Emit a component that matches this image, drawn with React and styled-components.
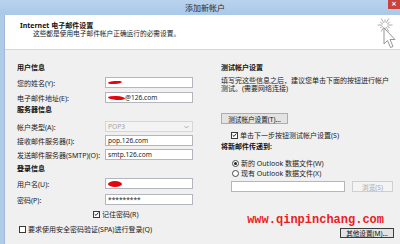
import React from "react";
import styled, { createGlobalStyle } from "styled-components";

const GlobalStyle = createGlobalStyle`
  *, *::before, *::after { box-sizing: border-box; }
  html, body { margin: 0; padding: 0; }
  body {
    background: #f0f0f0;
    font-family: "Noto Sans", "Noto Sans CJK SC", sans-serif;
    font-size: 7px;
    color: #1b1b1b;
  }
  #root { width: 400px; height: 244px; }
`;

const Window = styled.div`
  width: 400px;
  height: 244px;
  overflow: hidden;
  display: flex;
  flex-direction: column;
  background: #f0f0f0;
`;

const TitleBar = styled.div`
  height: 15px;
  flex: none;
  display: grid;
  grid-template-columns: 1fr auto 1fr;
  padding-left: 10px;
  background: linear-gradient(#b9d3ee, #aac8e8);
`;

const Title = styled.div`
  grid-column: 2;
  align-self: center;
  font-family: "Noto Sans CJK SC", sans-serif;
  font-size: 8px;
  line-height: 15px;
  color: #2a2a2a;
`;

const CloseButton = styled.div`
  grid-column: 3;
  justify-self: end;
  align-self: start;
  width: 12px;
  height: 9px;
  background: #c9433b;
  color: #fff;
  font-family: "DejaVu Sans", sans-serif;
  font-size: 7px;
  font-weight: bold;
  line-height: 9px;
  text-align: center;
`;

const Frame = styled.div`
  flex: 1;
  display: flex;
  min-height: 0;
`;

const Edge = styled.div`
  width: 5px;
  flex: none;
  background: #aecbea;
  border-right: 1px solid #9fb9d8;
`;

const Content = styled.div`
  flex: 1;
  display: flex;
  flex-direction: column;
  min-width: 0;
`;

const Header = styled.div`
  height: 35px;
  flex: none;
  display: flex;
  justify-content: space-between;
  background: #fff;
  border-bottom: 1px solid #d7d7d7;
`;

const HeaderText = styled.div`
  padding: 7px 0 0 15px;
  line-height: 8px;
`;

const HeaderTitle = styled.div`
  font-weight: bold;
  color: #111;
`;

const HeaderSub = styled.div`
  padding-left: 13px;
  font-size: 6.7px;
  color: #222;
`;

const CursorArt = styled.svg`
  flex: none;
  margin: 1px 2px 0 0;
`;

const Body = styled.div`
  flex: 1;
  display: grid;
  grid-template-columns: 176px 173px;
  column-gap: 28px;
  align-content: start;
  padding: 12px 0 0 12px;
`;

const Column = styled.div`
  display: flex;
  flex-direction: column;
`;

const Heading = styled.div`
  height: 12px;
  line-height: 12px;
  font-weight: bold;
  color: #111;
  margin-top: ${(p) => p.$mt || 0}px;
`;

const FieldRow = styled.div`
  display: flex;
  align-items: center;
  height: 11px;
  margin-top: ${(p) => p.$mt || 0}px;
`;

const Label = styled.div`
  width: 88px;
  flex: none;
  white-space: nowrap;
`;

const TextBox = styled.div`
  flex: 1;
  height: 100%;
  display: flex;
  align-items: center;
  padding-left: 2px;
  background: #fff;
  border: 1px solid #b4b6bd;
  font-size: 6.6px;
  white-space: nowrap;
  overflow: hidden;
  color: #222;
`;

const SelectBox = styled(TextBox)`
  justify-content: space-between;
  padding-right: 3px;
  background: #f3f3f3;
  border-color: #d6d6d6;
  color: #a4a4a4;
`;

const Scribble = styled.span`
  display: inline-block;
  width: ${(p) => p.$w}px;
  height: ${(p) => p.$h}px;
  background: #e4060f;
  border-radius: 50%;
  flex: none;
  transform: rotate(${(p) => p.$r || 0}deg);
`;

const CheckRow = styled.label`
  display: flex;
  align-items: center;
  gap: 2px;
  height: 10px;
  margin-top: ${(p) => p.$mt || 0}px;
  padding-left: ${(p) => p.$indent || 0}px;
  white-space: nowrap;
`;

const CheckBox = styled.span`
  width: 7px;
  height: 7px;
  flex: none;
  display: flex;
  align-items: center;
  justify-content: center;
  background: #fff;
  border: 1px solid #3a3a3a;
`;

const Radio = styled.span`
  width: 7px;
  height: 7px;
  flex: none;
  display: flex;
  align-items: center;
  justify-content: center;
  border-radius: 50%;
  background: #fff;
  border: 1px solid #4a4a4a;
  &::after {
    content: "";
    width: 3px;
    height: 3px;
    border-radius: 50%;
    background: ${(p) => (p.$on ? "#222" : "transparent")};
  }
`;

const Paragraph = styled.div`
  margin-top: ${(p) => p.$mt || 0}px;
  line-height: 8px;
  white-space: nowrap;
`;

const Button = styled.div`
  width: ${(p) => p.$w}px;
  height: ${(p) => p.$h || 11}px;
  flex: none;
  display: flex;
  align-items: center;
  justify-content: center;
  margin-top: ${(p) => p.$mt || 0}px;
  align-self: ${(p) => (p.$end ? "flex-end" : "flex-start")};
  background: ${(p) => (p.$disabled ? "#f4f4f4" : "#e3e3e3")};
  border: 1px solid ${(p) => (p.$disabled ? "#cfcfcf" : p.$default ? "#3c3c3c" : "#adadad")};
  color: ${(p) => (p.$disabled ? "#a8a8a8" : "#111")};
  font-size: 6.6px;
  white-space: nowrap;
`;

const BrowseRow = styled.div`
  display: flex;
  gap: 7px;
  height: 11px;
  margin-top: ${(p) => p.$mt || 0}px;
  padding-left: 10px;
`;

const PathBox = styled.div`
  width: 114px;
  height: 100%;
  background: #fff;
  border: 1px solid #b4b6bd;
`;

const Watermark = styled.div`
  margin-top: ${(p) => p.$mt || 0}px;
  align-self: flex-end;
  margin-right: 10px;
  height: 12px;
  line-height: 12px;
  font-family: "Liberation Mono", monospace;
  font-size: 12px;
  font-weight: bold;
  color: #ec1c24;
`;

function Check() {
  return (
    <svg width="6" height="6" viewBox="0 0 6 6">
      <path d="M0.8 3.1 L2.4 4.7 L5.3 1.2" fill="none" stroke="#111" strokeWidth="1.1" />
    </svg>
  );
}

function Cursor() {
  const rays = [];
  for (let i = 0; i < 12; i++) {
    const a = (i * Math.PI) / 6;
    const r1 = 2.5;
    const r2 = i % 2 ? 5.5 : 7.5;
    rays.push(
      <line
        key={i}
        x1={9 + r1 * Math.cos(a)}
        y1={9 + r1 * Math.sin(a)}
        x2={9 + r2 * Math.cos(a)}
        y2={9 + r2 * Math.sin(a)}
        stroke="#9a9a9a"
        strokeWidth="0.8"
      />
    );
  }
  return (
    <CursorArt width="22" height="34" viewBox="0 0 22 34">
      {rays}
      <path
        d="M8 12 L8 28 L11.5 24.5 L14.5 31.5 L17 30.5 L14 23.5 L19 23.5 Z"
        fill="#fff"
        stroke="#8a8a8a"
        strokeWidth="0.9"
        strokeLinejoin="round"
      />
    </CursorArt>
  );
}

export default function App() {
  return (
    <>
      <GlobalStyle />
      <Window>
        <TitleBar>
          <Title>添加新帐户</Title>
          <CloseButton>×</CloseButton>
        </TitleBar>
        <Frame>
          <Edge />
          <Content>
            <Header>
              <HeaderText>
                <HeaderTitle>Internet 电子邮件设置</HeaderTitle>
                <HeaderSub>这些都是使用电子邮件帐户正确运行的必需设置。</HeaderSub>
              </HeaderText>
              <Cursor />
            </Header>
            <Body>
              <Column>
                <Heading>用户信息</Heading>
                <FieldRow $mt={3}>
                  <Label>您的姓名(Y):</Label>
                  <TextBox>
                    <Scribble $w={14} $h={3} $r={-4} />
                  </TextBox>
                </FieldRow>
                <FieldRow $mt={4}>
                  <Label>电子邮件地址(E):</Label>
                  <TextBox>
                    <Scribble $w={17} $h={4} $r={3} />
                    @126.com
                  </TextBox>
                </FieldRow>
                <Heading $mt={1}>服务器信息</Heading>
                <FieldRow $mt={5}>
                  <Label>帐户类型(A):</Label>
                  <SelectBox>
                    POP3
                    <svg width="5" height="4" viewBox="0 0 5 4">
                      <path d="M0.5 1 L2.5 3 L4.5 1" fill="none" stroke="#a0a0a0" strokeWidth="0.8" />
                    </svg>
                  </SelectBox>
                </FieldRow>
                <FieldRow $mt={3}>
                  <Label>接收邮件服务器(I):</Label>
                  <TextBox>pop.126.com</TextBox>
                </FieldRow>
                <FieldRow $mt={3}>
                  <Label>发送邮件服务器(SMTP)(O):</Label>
                  <TextBox>smtp.126.com</TextBox>
                </FieldRow>
                <Heading $mt={3}>登录信息</Heading>
                <FieldRow $mt={3}>
                  <Label>用户名(U):</Label>
                  <TextBox>
                    <Scribble $w={14} $h={6} />
                  </TextBox>
                </FieldRow>
                <FieldRow $mt={5}>
                  <Label>密码(P):</Label>
                  <TextBox>*********</TextBox>
                </FieldRow>
                <CheckRow $mt={4} $indent={76}>
                  <CheckBox>
                    <Check />
                  </CheckBox>
                  记住密码(R)
                </CheckRow>
                <CheckRow $mt={5} $indent={2}>
                  <CheckBox />
                  要求使用安全密码验证(SPA)进行登录(Q)
                </CheckRow>
              </Column>
              <Column>
                <Heading>测试帐户设置</Heading>
                <Paragraph $mt={3}>
                  填写完这些信息之后，建议您单击下面的按钮进行帐户
                  <br />
                  测试。(需要网络连接)
                </Paragraph>
                <Button $w={67} $mt={20}>
                  测试帐户设置(T)...
                </Button>
                <CheckRow $mt={6} $indent={10}>
                  <CheckBox>
                    <Check />
                  </CheckBox>
                  单击下一步按钮测试帐户设置(S)
                </CheckRow>
                <Heading $mt={1}>将新邮件传递到:</Heading>
                <CheckRow $mt={5} $indent={11}>
                  <Radio $on />
                  新的 Outlook 数据文件(W)
                </CheckRow>
                <CheckRow $indent={11}>
                  <Radio />
                  现有 Outlook 数据文件(X)
                </CheckRow>
                <BrowseRow $mt={3}>
                  <PathBox />
                  <Button $w={41} $disabled>
                    浏览(S)
                  </Button>
                </BrowseRow>
                <Watermark $mt={22}>www.qinpinchang.com</Watermark>
                <Button $w={54} $h={10} $mt={2} $end $default>
                  其他设置(M)...
                </Button>
              </Column>
            </Body>
          </Content>
        </Frame>
      </Window>
    </>
  );
}
